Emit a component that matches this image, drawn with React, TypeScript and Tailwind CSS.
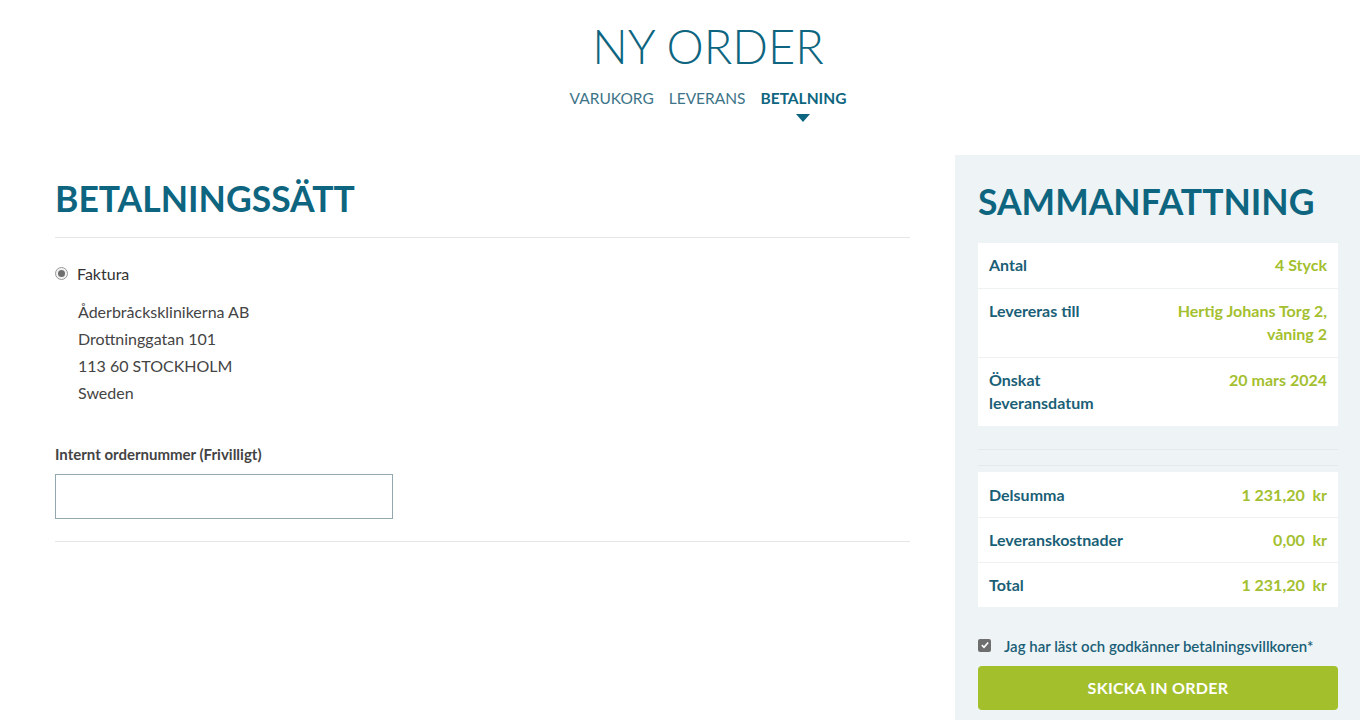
import React from "react";

const summaryTop = [
  { label: "Antal", value: ["4 Styck"] },
  { label: "Levereras till", value: ["Hertig Johans Torg 2,", "våning 2"] },
  { label: "Önskat leveransdatum", value: ["20 mars 2024"], narrow: true },
];

const summaryTotals = [
  { label: "Delsumma", value: "1 231,20" },
  { label: "Leveranskostnader", value: "0,00" },
  { label: "Total", value: "1 231,20" },
];

export default function App() {
  return (
    <div className="min-h-screen bg-white font-['Lato','Open_Sans',sans-serif] text-[#444]">
      {/* Header */}
      <header className="flex flex-col items-center pt-[20px] pl-[51px]">
        <h1 className="text-[47px] leading-[52px] font-light text-[#0e6580]">NY ORDER</h1>
        <nav className="mt-[16px] flex gap-[15px] text-[15.5px] leading-[20px]">
          <span className="text-[#3d7488]">VARUKORG</span>
          <span className="text-[#3d7488]">LEVERANS</span>
          <span className="relative font-bold text-[#0e6580]">
            BETALNING
            <span className="absolute left-1/2 top-[26px] -translate-x-1/2 h-0 w-0 border-x-[7px] border-t-[8px] border-x-transparent border-t-[#0e6580]" />
          </span>
        </nav>
      </header>

      <div className="mt-[47px] flex">
        {/* Left column */}
        <section className="ml-[55px] w-[855px] pt-[24px]">
          <h2 className="text-[35.5px] leading-[40px] font-bold text-[#0e6580]">BETALNINGSSÄTT</h2>
          <div className="mt-[18px] border-t border-[#e6e6e6]" />
          <label className="mt-[24px] flex items-center gap-[9px] text-[16px] text-[#333]">
            <span className="flex h-[13px] w-[13px] -mt-[2px] items-center justify-center rounded-full border border-[#999] bg-[#f2f2f2]">
              <span className="h-[7px] w-[7px] rounded-full bg-[#6e6e6e]" />
            </span>
            Faktura
          </label>
          <div className="mt-[12px] pl-[23px] text-[16px] leading-[27px] text-[#444]">
            <div>Åderbråcksklinikerna AB</div>
            <div>Drottninggatan 101</div>
            <div>113 60 STOCKHOLM</div>
            <div>Sweden</div>
          </div>
          <div className="mt-[37px] text-[15px] font-bold text-[#444]">Internt ordernummer (Frivilligt)</div>
          <input
            type="text"
            className="mt-[8px] block h-[45px] w-[338px] border border-[#93a7ae] px-3 outline-none"
          />
          <div className="mt-[22px] border-t border-[#e6e6e6]" />
        </section>

        {/* Summary panel */}
        <aside className="ml-[45px] w-[405px] bg-[#eef4f6] px-[23px] pt-[27px] pb-[10px]">
          <h2 className="text-[35.5px] leading-[40px] font-bold text-[#0e6580]">SAMMANFATTNING</h2>
          <div className="mt-[21px] w-[360px] bg-white">
            {summaryTop.map((row, i) => (
              <div
                key={row.label}
                className={`flex justify-between px-[11px] pt-[10px] pb-[12px] text-[16px] leading-[23px] font-bold ${
                  i > 0 ? "border-t border-[#eef2f3]" : ""
                }`}
              >
                <span className={`text-[#1b5f77] ${row.narrow ? "w-[110px]" : ""}`}>{row.label}</span>
                <span className="text-right text-[#a4bf2f]">
                  {row.value.map((v) => (
                    <div key={v}>{v}</div>
                  ))}
                </span>
              </div>
            ))}
          </div>
          <div className="mt-[23px] h-[17px] w-[360px] border-y border-[#e2eaed]" />
          <div className="mt-[6px] w-[360px] bg-white">
            {summaryTotals.map((row, i) => (
              <div
                key={row.label}
                className={`flex h-[45px] items-center justify-between px-[11px] text-[16px] font-bold ${
                  i > 0 ? "border-t border-[#eef2f3]" : ""
                }`}
              >
                <span className="text-[#1b5f77]">{row.label}</span>
                <span className="text-[#a4bf2f]">
                  {row.value}&nbsp;&nbsp;kr
                </span>
              </div>
            ))}
          </div>
          <label className="mt-[28px] flex items-center gap-[13px] text-[15px] font-semibold text-[#1b5f77]">
            <span className="flex h-[13px] w-[13px] -mt-[2px] items-center justify-center rounded-[2px] bg-[#6e6e6e]">
              <svg viewBox="0 0 12 12" className="h-[10px] w-[10px]" fill="none" stroke="white" strokeWidth="2">
                <path d="M2.2 6.2 L4.8 8.8 L9.8 3" />
              </svg>
            </span>
            Jag har läst och godkänner betalningsvillkoren*
          </label>
          <button className="mt-[8px] flex h-[44px] w-[360px] items-center justify-center rounded-[4px] bg-[#a3bf2b] text-[16px] font-bold tracking-[0.3px] text-white">
            SKICKA IN ORDER
          </button>
        </aside>
      </div>
    </div>
  );
}
